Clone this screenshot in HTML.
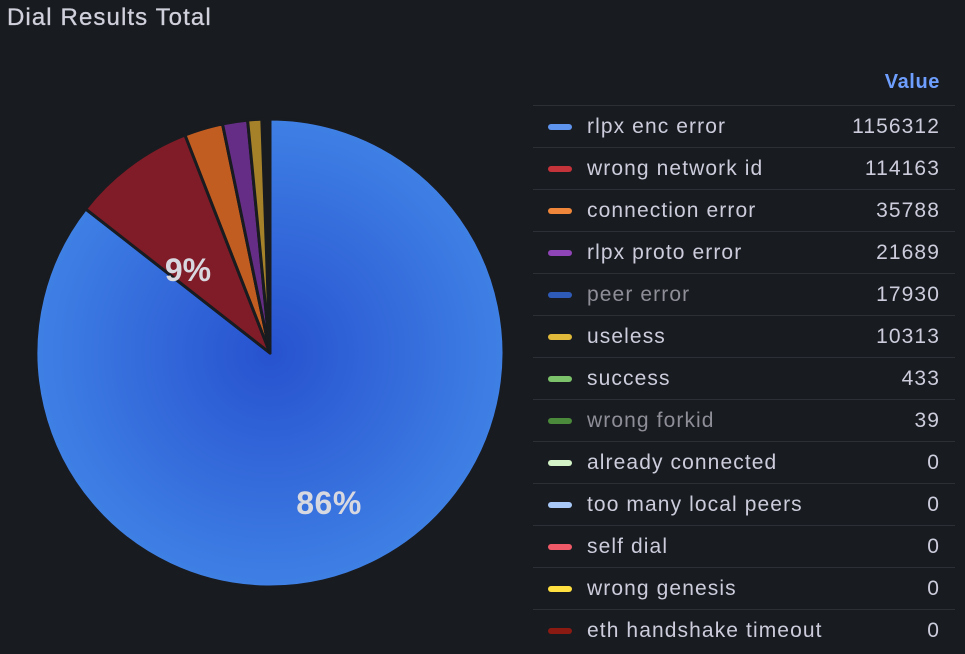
<!DOCTYPE html>
<html><head><meta charset="utf-8"><style>
body{margin:0;width:965px;height:654px;background:#181b1f;font-family:"Liberation Sans",sans-serif;color:#ccccdc;overflow:hidden;position:relative}
.title{position:absolute;left:7px;top:4px;font-size:24px;font-weight:500;color:#d0d0dc;letter-spacing:1.1px;-webkit-text-stroke:0.3px #d0d0dc}
.hdr{position:absolute;left:533px;width:407px;top:71px;text-align:right;font-size:20px;font-weight:bold;color:#6e9fff;letter-spacing:0.6px}
.row{position:absolute;left:533px;width:422px;height:42px;border-top:1px solid #2c2f35;font-size:21px;line-height:42px;letter-spacing:1.1px}
.sw{position:absolute;left:15px;top:18px;width:24px;height:6px;border-radius:3px}
.lbl{position:absolute;left:54px}
.val{position:absolute;right:15px;letter-spacing:1.1px}
.dim{color:#8e8e98}
</style></head><body>
<div class="title">Dial Results Total</div>
<svg width="965" height="654" style="position:absolute;left:0;top:0">
<defs><radialGradient id="bg" cx="270" cy="353" r="234" gradientUnits="userSpaceOnUse"><stop offset="0" stop-color="#2752cf"/><stop offset="1" stop-color="#3f80e5"/></radialGradient></defs>
<g stroke="#181b1f" stroke-width="3" stroke-linejoin="round">
<path d="M270,353 L270,119 A234,234 0 1 1 85.6,208.9 Z" fill="url(#bg)"/>
<path d="M270,353 L85.6,208.9 A234,234 0 0 1 185,135 Z" fill="#801c27"/>
<path d="M270,353 L185,135 A234,234 0 0 1 222.5,123.9 Z" fill="#c25d22"/>
<path d="M270,353 L222.5,123.9 A234,234 0 0 1 247.6,120.1 Z" fill="#662d87"/>
<path d="M270,353 L247.6,120.1 A234,234 0 0 1 261.8,119.1 Z" fill="#a5822a"/>
</g>
<text x="329" y="514" text-anchor="middle" font-size="32" font-weight="bold" fill="#d8d8e0" font-family="Liberation Sans" letter-spacing="0.5">86%</text>
<text x="188" y="281" text-anchor="middle" font-size="32" font-weight="bold" fill="#d8d8e0" font-family="Liberation Sans">9%</text>
</svg>
<div class="hdr">Value</div>
<div class="row" style="top:105px"><span class="sw" style="background:#5f94ee"></span><span class="lbl">rlpx enc error</span><span class="val">1156312</span></div>
<div class="row" style="top:147px"><span class="sw" style="background:#c4323a"></span><span class="lbl">wrong network id</span><span class="val">114163</span></div>
<div class="row" style="top:189px"><span class="sw" style="background:#f0863a"></span><span class="lbl">connection error</span><span class="val">35788</span></div>
<div class="row" style="top:231px"><span class="sw" style="background:#8f44b8"></span><span class="lbl">rlpx proto error</span><span class="val">21689</span></div>
<div class="row" style="top:273px"><span class="sw" style="background:#2f5bb8"></span><span class="lbl dim">peer error</span><span class="val">17930</span></div>
<div class="row" style="top:315px"><span class="sw" style="background:#e0b83a"></span><span class="lbl">useless</span><span class="val">10313</span></div>
<div class="row" style="top:357px"><span class="sw" style="background:#7cc26a"></span><span class="lbl">success</span><span class="val">433</span></div>
<div class="row" style="top:399px"><span class="sw" style="background:#4a8a3a"></span><span class="lbl dim">wrong forkid</span><span class="val">39</span></div>
<div class="row" style="top:441px"><span class="sw" style="background:#d4f4c8"></span><span class="lbl">already connected</span><span class="val">0</span></div>
<div class="row" style="top:483px"><span class="sw" style="background:#a8c8f8"></span><span class="lbl">too many local peers</span><span class="val">0</span></div>
<div class="row" style="top:525px"><span class="sw" style="background:#f05a68"></span><span class="lbl">self dial</span><span class="val">0</span></div>
<div class="row" style="top:567px"><span class="sw" style="background:#ffe040"></span><span class="lbl">wrong genesis</span><span class="val">0</span></div>
<div class="row" style="top:609px"><span class="sw" style="background:#8a1a12"></span><span class="lbl">eth handshake timeout</span><span class="val">0</span></div>
</body></html>
